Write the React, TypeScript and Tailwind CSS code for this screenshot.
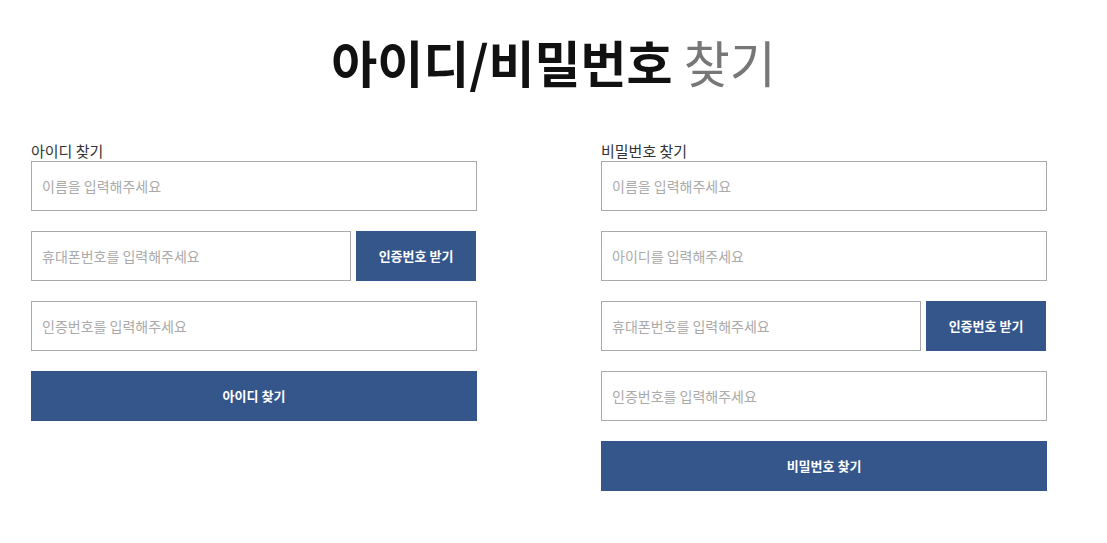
const font = { fontFamily: '"Noto Sans CJK KR", "Noto Sans", sans-serif' };

function Field({ placeholder, className = "" }: { placeholder: string; className?: string }) {
  return (
    <input
      type="text"
      placeholder={placeholder}
      className={`h-[50px] border border-[#aaaaaa] px-[10px] text-[14px] text-[#333] placeholder:text-[#aaaaaa] outline-none ${className}`}
    />
  );
}

function PhoneRow() {
  return (
    <div className="flex gap-[5px]">
      <Field placeholder="휴대폰번호를 입력해주세요" className="w-[320px]" />
      <button className="h-[50px] w-[120px] bg-[#34568a] text-[13px] font-semibold text-white">
        인증번호 받기
      </button>
    </div>
  );
}

function Section({ title, children, submit }: { title: string; children: React.ReactNode; submit: string }) {
  return (
    <div className="flex w-[446px] flex-col">
      <div className="text-[15px] leading-[20px] text-[#333]">{title}</div>
      <div className="flex flex-col gap-[20px]">
        {children}
        <button className="h-[50px] w-full bg-[#34568a] text-[13px] font-semibold text-white">{submit}</button>
      </div>
    </div>
  );
}

export default function App() {
  return (
    <div className="min-h-[543px] bg-white" style={font}>
      <h1 className="pt-[29px] text-center text-[50px] leading-[64px] font-bold text-[#111]">
        아이디/비밀번호 <span className="font-normal text-[#777]">찾기</span>
      </h1>
      <div className="mt-[48px] flex gap-[124px] pl-[31px]">
        <Section title="아이디 찾기" submit="아이디 찾기">
          <Field placeholder="이름을 입력해주세요" className="w-full" />
          <PhoneRow />
          <Field placeholder="인증번호를 입력해주세요" className="w-full" />
        </Section>
        <Section title="비밀번호 찾기" submit="비밀번호 찾기">
          <Field placeholder="이름을 입력해주세요" className="w-full" />
          <Field placeholder="아이디를 입력해주세요" className="w-full" />
          <PhoneRow />
          <Field placeholder="인증번호를 입력해주세요" className="w-full" />
        </Section>
      </div>
    </div>
  );
}
